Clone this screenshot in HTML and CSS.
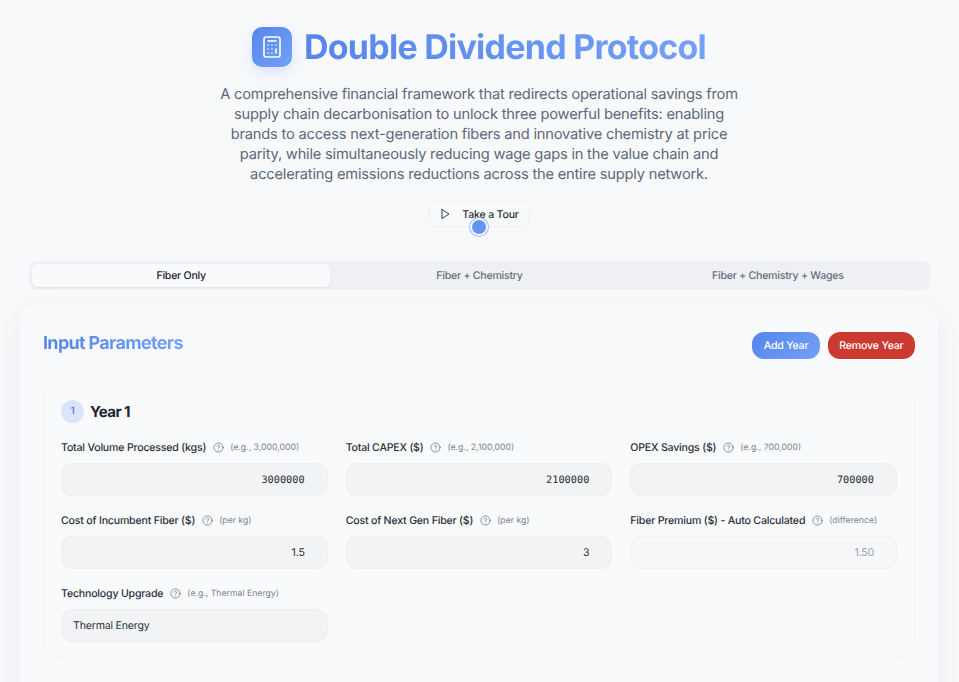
FILE: index.html
```html
<!DOCTYPE html>
<html lang="en">
<head>
    <meta charset="UTF-8">
    <meta name="viewport" content="width=device-width, initial-scale=1.0">
    <title>Double Dividend Protocol</title>
    <link rel="stylesheet" href="styles.css">
</head>
<body>
    <header class="hero">
        <div class="hero-title">
            <div class="logo">
                <svg width="24" height="24" viewBox="0 0 24 24" fill="none" stroke="#fff" stroke-width="1.6" stroke-linecap="round" stroke-linejoin="round">
                    <rect x="4" y="2" width="16" height="20" rx="2"></rect>
                    <line x1="8" y1="6" x2="16" y2="6"></line>
                    <line x1="16" y1="14" x2="16" y2="18"></line>
                    <path d="M16 10h.01"></path>
                    <path d="M12 10h.01"></path>
                    <path d="M8 10h.01"></path>
                    <path d="M12 14h.01"></path>
                    <path d="M8 14h.01"></path>
                    <path d="M12 18h.01"></path>
                    <path d="M8 18h.01"></path>
                </svg>
            </div>
            <h1>Double Dividend Protocol</h1>
        </div>
        <p class="hero-text">A comprehensive financial framework that redirects operational savings from supply chain decarbonisation to unlock three powerful benefits: enabling brands to access next-generation fibers and innovative chemistry at price parity, while simultaneously reducing wage gaps in the value chain and accelerating emissions reductions across the entire supply network.</p>
        <div class="tour-wrap">
            <button class="tour-btn">
                <svg width="12" height="12" viewBox="0 0 24 24" fill="none" stroke="#374151" stroke-width="2" stroke-linecap="round" stroke-linejoin="round"><polygon points="6 3 20 12 6 21 6 3"></polygon></svg>
                Take a Tour
            </button>
            <span class="tour-dot"></span>
        </div>
    </header>

    <nav class="tabs">
        <button class="tab active">Fiber Only</button>
        <button class="tab">Fiber + Chemistry</button>
        <button class="tab">Fiber + Chemistry + Wages</button>
    </nav>

    <main class="card">
        <div class="card-head">
            <h2>Input Parameters</h2>
            <div class="card-actions">
                <button class="btn btn-add">Add Year</button>
                <button class="btn btn-remove">Remove Year</button>
            </div>
        </div>

        <section class="year">
            <div class="year-head">
                <span class="year-num">1</span>
                <h3>Year 1</h3>
            </div>
            <div class="fields">
                <div class="field">
                    <label>Total Volume Processed (kgs)<svg class="help" viewBox="0 0 24 24"><circle cx="12" cy="12" r="10"></circle><path d="M9.09 9a3 3 0 0 1 5.83 1c0 2-3 3-3 3"></path><path d="M12 17h.01"></path></svg><small>(e.g., 3,000,000)</small></label>
                    <input class="num mono" type="text" value="3000000">
                </div>
                <div class="field">
                    <label>Total CAPEX ($)<svg class="help" viewBox="0 0 24 24"><circle cx="12" cy="12" r="10"></circle><path d="M9.09 9a3 3 0 0 1 5.83 1c0 2-3 3-3 3"></path><path d="M12 17h.01"></path></svg><small>(e.g., 2,100,000)</small></label>
                    <input class="num mono" type="text" value="2100000">
                </div>
                <div class="field">
                    <label>OPEX Savings ($)<svg class="help" viewBox="0 0 24 24"><circle cx="12" cy="12" r="10"></circle><path d="M9.09 9a3 3 0 0 1 5.83 1c0 2-3 3-3 3"></path><path d="M12 17h.01"></path></svg><small>(e.g., 700,000)</small></label>
                    <input class="num mono" type="text" value="700000">
                </div>
                <div class="field">
                    <label>Cost of Incumbent Fiber ($)<svg class="help" viewBox="0 0 24 24"><circle cx="12" cy="12" r="10"></circle><path d="M9.09 9a3 3 0 0 1 5.83 1c0 2-3 3-3 3"></path><path d="M12 17h.01"></path></svg><small>(per kg)</small></label>
                    <input class="num" type="text" value="1.5">
                </div>
                <div class="field">
                    <label>Cost of Next Gen Fiber ($)<svg class="help" viewBox="0 0 24 24"><circle cx="12" cy="12" r="10"></circle><path d="M9.09 9a3 3 0 0 1 5.83 1c0 2-3 3-3 3"></path><path d="M12 17h.01"></path></svg><small>(per kg)</small></label>
                    <input class="num" type="text" value="3">
                </div>
                <div class="field">
                    <label>Fiber Premium ($) - Auto Calculated<svg class="help" viewBox="0 0 24 24"><circle cx="12" cy="12" r="10"></circle><path d="M9.09 9a3 3 0 0 1 5.83 1c0 2-3 3-3 3"></path><path d="M12 17h.01"></path></svg><small>(difference)</small></label>
                    <input class="num auto" type="text" value="1.50" disabled>
                </div>
                <div class="field">
                    <label>Technology Upgrade<svg class="help" viewBox="0 0 24 24"><circle cx="12" cy="12" r="10"></circle><path d="M9.09 9a3 3 0 0 1 5.83 1c0 2-3 3-3 3"></path><path d="M12 17h.01"></path></svg><small>(e.g., Thermal Energy)</small></label>
                    <input type="text" value="Thermal Energy">
                </div>
            </div>
        </section>
    </main>
</body>
</html>
```

FILE: styles.css
```css
* {
    box-sizing: border-box;
}
html, body {
    height: 682px;
    overflow: hidden;
}
body {
    margin: 0;
    padding: 27px 21px 0 20px;
    background-color: #f8f9fb;
    font-family: Inter, "Liberation Sans", sans-serif;
    color: #1f2430;
    text-rendering: geometricPrecision;
}
button {
    font-family: inherit;
    text-rendering: inherit;
}

/* Header */
.hero {
    text-align: center;
}
.hero-title {
    display: flex;
    justify-content: center;
    align-items: center;
    gap: 12px;
}
.logo {
    width: 40px;
    height: 40px;
    border-radius: 10px;
    background: linear-gradient(135deg, #5686ea, #74a0f6);
    box-shadow: 0 6px 14px rgba(86, 134, 234, 0.18);
    display: flex;
    justify-content: center;
    align-items: center;
}
h1 {
    margin: 2px 0 0;
    font-size: 34px;
    line-height: 38px;
    font-weight: 700;
    letter-spacing: -0.75px;
    background: linear-gradient(90deg, #5686ea, #74a0f6);
    -webkit-background-clip: text;
    background-clip: text;
    color: transparent;
}
.hero-text {
    width: 540px;
    margin: 17px auto 0;
    font-size: 14.67px;
    line-height: 20px;
    letter-spacing: -0.2px;
    color: #5d6779;
}
.tour-wrap {
    position: relative;
    width: 101px;
    margin: 17px auto 0;
}
.tour-btn {
    width: 101px;
    height: 26px;
    display: flex;
    align-items: center;
    justify-content: center;
    gap: 11px;
    padding: 0;
    background-color: #f9fafc;
    border: 1px solid #eff0f3;
    border-radius: 8px;
    font-size: 10.6px;
    font-weight: 500;
    letter-spacing: -0.2px;
    color: #2b303b;
}
.tour-dot {
    position: absolute;
    left: 43px;
    top: 19px;
    width: 14px;
    height: 14px;
    border-radius: 50%;
    background-color: #6495f2;
    box-shadow: 0 0 0 2px #f8f9fb, 0 0 0 3px #9dbcf6;
}

/* Tabs */
.tabs {
    display: grid;
    grid-template-columns: repeat(3, 1fr);
    width: 901px;
    height: 29px;
    margin: 34px 0 0 9px;
    padding: 3px;
    background-color: #eff0f3;
    border-radius: 8px;
}
.tab {
    border: none;
    background: none;
    padding: 0;
    border-radius: 6px;
    font-size: 10.6px;
    font-weight: 500;
    letter-spacing: -0.25px;
    color: #646d7e;
}
.tab.active {
    background-color: #f9fafc;
    color: #1f2430;
    box-shadow: 0 1px 2px rgba(0, 0, 0, 0.05);
}

/* Card */
.card {
    margin-top: 14px;
    height: 420px;
    padding: 22px;
    background-color: #f9fafc;
    border: 1px solid #f8f9fb;
    border-radius: 18px;
    box-shadow: 0 10px 30px rgba(31, 36, 48, 0.06);
}
.card-head {
    display: flex;
    justify-content: space-between;
    align-items: flex-start;
}
h2 {
    margin: 5px 0 0;
    font-size: 18px;
    line-height: 24px;
    font-weight: 700;
    letter-spacing: -0.68px;
    background: linear-gradient(90deg, #5686ea, #74a0f6);
    -webkit-background-clip: text;
    background-clip: text;
    color: transparent;
}
.card-actions {
    display: flex;
    gap: 8px;
    margin-top: 5px;
}
.btn {
    height: 27px;
    padding: 0 11.5px;
    border: none;
    border-radius: 12px;
    color: #fff;
    font-size: 10.6px;
    font-weight: 500;
    letter-spacing: -0.2px;
}
.btn-add {
    background: linear-gradient(135deg, #5686ea, #74a0f6);
}
.btn-remove {
    background-color: #cb3a30;
}

/* Year block */
.year {
    margin-top: 22px;
    padding: 17px;
    height: 277px;
    border: 1px solid #f3f4f6;
    border-radius: 16px;
}
.year-head {
    display: flex;
    align-items: center;
    gap: 6px;
    height: 24px;
}
.year-num {
    width: 23px;
    height: 23px;
    border-radius: 50%;
    background-color: #dbe5f9;
    color: #5686ea;
    font-size: 10px;
    font-weight: 600;
    display: flex;
    justify-content: center;
    align-items: center;
}
h3 {
    margin: 0;
    font-size: 15px;
    font-weight: 700;
    letter-spacing: -0.55px;
}
.fields {
    display: grid;
    grid-template-columns: repeat(3, 1fr);
    column-gap: 18px;
    row-gap: 17px;
    margin-top: 17px;
}
.field label {
    display: flex;
    align-items: center;
    height: 15px;
    margin-bottom: 8px;
    font-size: 10.6px;
    font-weight: 500;
    letter-spacing: -0.2px;
    color: #2b303b;
}
.help {
    width: 11px;
    height: 11px;
    margin: 0 6px 0 7px;
    fill: none;
    stroke: #646d7e;
    stroke-width: 1.6;
    stroke-linecap: round;
    stroke-linejoin: round;
}
.field small {
    font-size: 8.7px;
    font-weight: 400;
    letter-spacing: 0;
    color: #7b8494;
}
.field input {
    display: block;
    width: 100%;
    height: 33px;
    padding: 0 11px;
    background-color: #f2f3f5;
    border: 1px solid #eceef1;
    border-radius: 11px;
    font-family: Inter, "Liberation Sans", sans-serif;
    font-size: 10.6px;
    letter-spacing: -0.2px;
    color: #2b303b;
    text-rendering: inherit;
}
.field input.num {
    text-align: right;
    padding-right: 22px;
}
.field input.mono {
    font-family: "DejaVu Sans Mono", monospace;
    font-size: 10.27px;
    letter-spacing: 0;
}
.field input.auto {
    background-color: #f6f7f9;
    border-color: #f1f2f4;
    color: #9aa0aa;
}
```
